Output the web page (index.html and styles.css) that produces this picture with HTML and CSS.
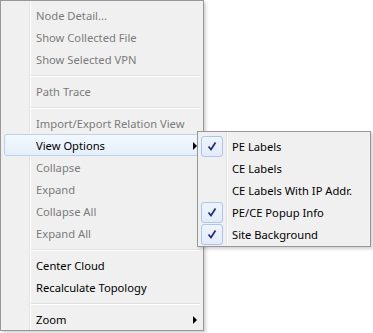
FILE: index.html
```html
<!DOCTYPE html>
<html>
<head>
<meta charset="utf-8">
<link rel="stylesheet" href="styles.css">
</head>
<body>
<div class="stage">
  <div class="menu main">
    <div class="item disabled">Node Detail...</div>
    <div class="item disabled">Show Collected File</div>
    <div class="item disabled">Show Selected VPN</div>
    <div class="sep"></div>
    <div class="item disabled">Path Trace</div>
    <div class="sep"></div>
    <div class="item disabled">Import/Export Relation View</div>
    <div class="item hl">View Options<span class="arrow"></span></div>
    <div class="item disabled">Collapse</div>
    <div class="item disabled">Expand</div>
    <div class="item disabled">Collapse All</div>
    <div class="item disabled">Expand All</div>
    <div class="sep"></div>
    <div class="item">Center Cloud</div>
    <div class="item">Recalculate Topology</div>
    <div class="sep"></div>
    <div class="item">Zoom<span class="arrow"></span></div>
  </div>
  <div class="menu sub">
    <div class="sitem"><span class="chk on"><svg width="20" height="19" viewBox="0 0 20 19"><path d="M6.5 9.5 L9 12.5 L13.5 5.5" fill="none" stroke="#1f2d80" stroke-width="1.7" stroke-linejoin="miter"/></svg></span><span class="lbl">PE Labels</span></div>
    <div class="sitem"><span class="chk"></span><span class="lbl">CE Labels</span></div>
    <div class="sitem"><span class="chk"></span><span class="lbl">CE Labels With IP Addr.</span></div>
    <div class="sitem"><span class="chk on"><svg width="20" height="19" viewBox="0 0 20 19"><path d="M6.5 9.5 L9 12.5 L13.5 5.5" fill="none" stroke="#1f2d80" stroke-width="1.7" stroke-linejoin="miter"/></svg></span><span class="lbl">PE/CE Popup Info</span></div>
    <div class="sitem"><span class="chk on"><svg width="20" height="19" viewBox="0 0 20 19"><path d="M6.5 9.5 L9 12.5 L13.5 5.5" fill="none" stroke="#1f2d80" stroke-width="1.7" stroke-linejoin="miter"/></svg></span><span class="lbl">Site Background</span></div>
  </div>
</div>
</body>
</html>
```

FILE: styles.css
```css
html, body {
  margin: 0;
  padding: 0;
  background: #ffffff;
}
body {
  font-family: "Noto Sans", "Open Sans", sans-serif;
  font-size: 11.2px;
  color: #000;
}
.stage {
  position: relative;
  width: 373px;
  height: 333px;
  overflow: hidden;
}
.menu {
  box-sizing: border-box;
  border: 1px solid #979797;
  background:
    linear-gradient(to right, transparent 28px, #e2e3e3 28px, #e2e3e3 29px, #ffffff 29px, #ffffff 30px, transparent 30px),
    #f0f0f0;
  box-shadow: 2px 2px 3px rgba(0, 0, 0, 0.18);
}
.main {
  width: 204px;
  height: 331px;
  padding: 3px 2px 0 2px;
}
.item {
  display: flex;
  align-items: center;
  height: 22px;
  margin: 0 1px;
  padding-left: 31px;
  padding-top: 1px;
  box-sizing: border-box;
  white-space: nowrap;
  border: 1px solid transparent;
  border-radius: 3px;
}
.item.disabled {
  color: #7b7b7b;
}
.item.hl {
  border-color: #b8d2f0;
  background: linear-gradient(to bottom, #f4f8fd, #e5eefa);
}
.arrow {
  margin-left: auto;
  margin-right: 2px;
  width: 0;
  height: 0;
  border-top: 4px solid transparent;
  border-bottom: 4px solid transparent;
  border-left: 4px solid #000;
}
.sep {
  height: 10px;
  margin-left: 28px;
  margin-right: 1px;
  background: linear-gradient(to bottom, transparent 5px, #e0e0e0 5px, #e0e0e0 6px, #ffffff 6px, #ffffff 7px, transparent 7px);
}
.sub {
  position: absolute;
  left: 197px;
  top: 131px;
  width: 174px;
  height: 116px;
  padding: 3px 2px;
}
.sitem {
  display: flex;
  align-items: center;
  height: 22px;
  white-space: nowrap;
}
.chk {
  box-sizing: border-box;
  width: 22px;
  height: 21px;
  margin: 0 0 0 1px;
  flex: none;
  display: flex;
  align-items: center;
  justify-content: center;
  border: 1px solid transparent;
  border-radius: 3px;
}
.chk.on {
  border-color: #aac6ea;
  background: linear-gradient(to bottom, #eef4fc, #e2ecf9);
}
.lbl {
  padding-left: 9px;
  padding-top: 1px;
}
```
